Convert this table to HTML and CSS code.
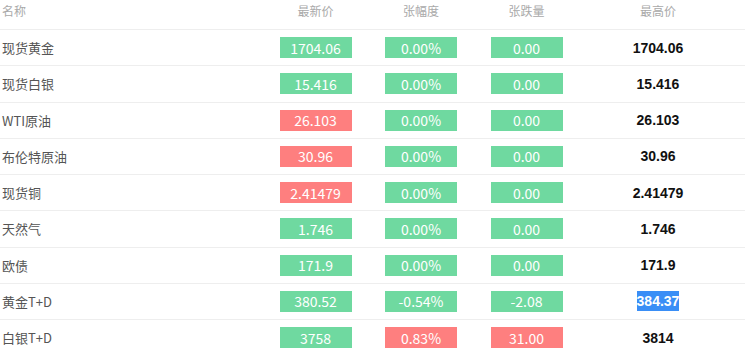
FILE: index.html
```html
<!DOCTYPE html>
<html>
<head>
<meta charset="utf-8">
<link rel="stylesheet" href="styles.css">
</head>
<body>
<div class="table">
  <div class="row head">
    <div class="name">名称</div>
    <div class="cell">最新价</div>
    <div class="cell">张幅度</div>
    <div class="cell">张跌量</div>
    <div class="cell">最高价</div>
  </div>
  <div class="row">
    <div class="name">现货黄金</div>
    <div class="cell"><span class="badge up">1704.06</span></div>
    <div class="cell"><span class="badge up">0.00%</span></div>
    <div class="cell"><span class="badge up">0.00</span></div>
    <div class="cell"><span class="high">1704.06</span></div>
  </div>
  <div class="row">
    <div class="name">现货白银</div>
    <div class="cell"><span class="badge up">15.416</span></div>
    <div class="cell"><span class="badge up">0.00%</span></div>
    <div class="cell"><span class="badge up">0.00</span></div>
    <div class="cell"><span class="high">15.416</span></div>
  </div>
  <div class="row">
    <div class="name">WTI原油</div>
    <div class="cell"><span class="badge down">26.103</span></div>
    <div class="cell"><span class="badge up">0.00%</span></div>
    <div class="cell"><span class="badge up">0.00</span></div>
    <div class="cell"><span class="high">26.103</span></div>
  </div>
  <div class="row">
    <div class="name">布伦特原油</div>
    <div class="cell"><span class="badge down">30.96</span></div>
    <div class="cell"><span class="badge up">0.00%</span></div>
    <div class="cell"><span class="badge up">0.00</span></div>
    <div class="cell"><span class="high">30.96</span></div>
  </div>
  <div class="row">
    <div class="name">现货铜</div>
    <div class="cell"><span class="badge down">2.41479</span></div>
    <div class="cell"><span class="badge up">0.00%</span></div>
    <div class="cell"><span class="badge up">0.00</span></div>
    <div class="cell"><span class="high">2.41479</span></div>
  </div>
  <div class="row">
    <div class="name">天然气</div>
    <div class="cell"><span class="badge up">1.746</span></div>
    <div class="cell"><span class="badge up">0.00%</span></div>
    <div class="cell"><span class="badge up">0.00</span></div>
    <div class="cell"><span class="high">1.746</span></div>
  </div>
  <div class="row">
    <div class="name">欧债</div>
    <div class="cell"><span class="badge up">171.9</span></div>
    <div class="cell"><span class="badge up">0.00%</span></div>
    <div class="cell"><span class="badge up">0.00</span></div>
    <div class="cell"><span class="high">171.9</span></div>
  </div>
  <div class="row">
    <div class="name">黄金T+D</div>
    <div class="cell"><span class="badge up">380.52</span></div>
    <div class="cell"><span class="badge up">-0.54%</span></div>
    <div class="cell"><span class="badge up">-2.08</span></div>
    <div class="cell"><span class="high selected">384.37</span></div>
  </div>
  <div class="row last">
    <div class="name">白银T+D</div>
    <div class="cell"><span class="badge up">3758</span></div>
    <div class="cell"><span class="badge down">0.83%</span></div>
    <div class="cell"><span class="badge down">31.00</span></div>
    <div class="cell"><span class="high">3814</span></div>
  </div>
</div>
</body>
</html>
```

FILE: styles.css
```css
html, body {
  margin: 0;
  padding: 0;
  background: #ffffff;
}
body {
  font-family: "Noto Sans CJK SC", "Noto Sans", sans-serif;
  width: 745px;
  height: 356px;
  overflow: hidden;
}
.table {
  display: flex;
  flex-direction: column;
}
.row {
  display: grid;
  grid-template-columns: 263px 105px 106px 105px 158px;
  align-items: center;
  height: 35.25px;
  border-bottom: 1px solid #eeeeee;
}
.row.last {
  border-bottom: none;
}
.row.head {
  height: 29px;
  align-items: start;
}
.head .name, .head .cell {
  font-size: 12px;
  color: #a9a9a9;
  line-height: 22px;
}
.name {
  padding-left: 2px;
  font-size: 13px;
  color: #555555;
}
.cell {
  display: flex;
  justify-content: center;
}
.badge {
  display: flex;
  align-items: center;
  justify-content: center;
  width: 72px;
  height: 21px;
  font-size: 14px;
  color: #ffffff;
}
.badge.up {
  background: #6fd9a0;
}
.badge.down {
  background: #fe7f7f;
}
.high {
  font-size: 14px;
  line-height: 16px;
  font-weight: bold;
  color: #111111;
  font-family: "Liberation Sans", "Noto Sans CJK SC", sans-serif;
}
.high.selected {
  background: #3a8ef6;
  color: #ffffff;
  padding: 2px 0;
}
```
